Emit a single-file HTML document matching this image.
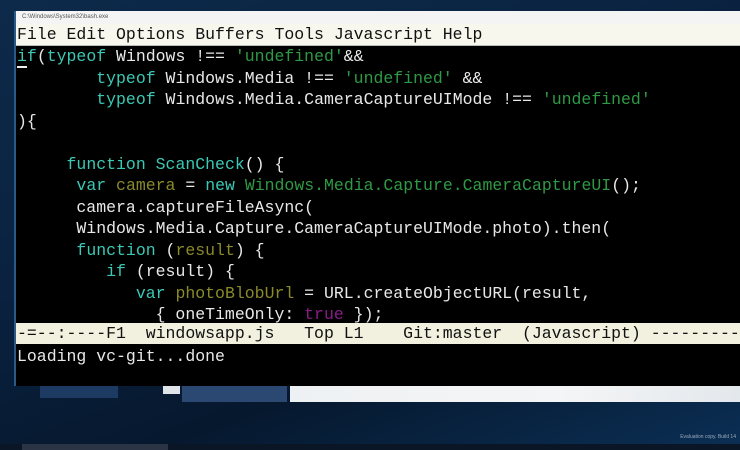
<!DOCTYPE html>
<html><head><style>
body{margin:0;width:740px;height:450px;overflow:hidden;background:linear-gradient(160deg,#0d2a4a 0%,#0a2240 40%,#06182e 70%,#0b2f55 100%);position:relative;font-family:"Liberation Mono",monospace}
.win{position:absolute;left:14px;top:11px;width:726px;height:375px;background:#000;border-left:2px solid #2a5a8a}
.title{height:13px;background:#f4f4f4;font:6px "Liberation Sans",sans-serif;color:#555;padding-left:6px;line-height:13px}
.menu{height:21px;background:#f7f7ee;color:#111;font-size:16.5px;line-height:22px;padding-left:1px;white-space:pre;border-bottom:1px solid #bbb}
.code{position:absolute;top:35px;left:1px;color:#e8e8e8;font-size:16.5px;line-height:21.5px;white-space:pre}
.k{color:#3cc8b4}.s{color:#2f9a45}.v{color:#8a8a2a}.p{color:#8a1a8a}.cur{border-bottom:2px solid #eee}
.mode{position:absolute;top:312px;left:0;right:0;height:21px;background:#f2f0de;color:#111;font-size:16.5px;line-height:21px;white-space:pre;padding-left:1px}
.mini{position:absolute;top:335px;left:1px;color:#e8e8e8;font-size:16.5px;line-height:22px;white-space:pre}
.strip1{position:absolute;left:40px;top:386px;width:78px;height:12px;background:#1d3a62}
.strip2{position:absolute;left:55px;top:386px;width:60px;height:10px;background:#24416a}
.w1{position:absolute;left:163px;top:386px;width:17px;height:8px;background:#dfe4e8}
.strip3{position:absolute;left:182px;top:386px;width:105px;height:16px;background:#2a4872;font:5px "Liberation Sans",sans-serif;color:#a8b8d0}
.w2{position:absolute;left:290px;top:386px;width:450px;height:16px;background:linear-gradient(90deg,#eef1f3,#f4f5f6 60%,#e3e8ec)}
.task{position:absolute;left:0;top:444px;width:740px;height:6px;background:#0a1526}
.sb{position:absolute;left:22px;top:444px;width:146px;height:6px;background:#2a3444}
.ev{position:absolute;right:4px;top:434px;font:5px "Liberation Sans",sans-serif;color:#9ab}
</style></head><body>
<div class="strip1"></div>
<div class="w1"></div>
<div class="strip3"></div>
<div class="w2"></div>
<div class="win">
<div class="title">C:\Windows\System32\bash.exe</div>
<div class="menu">File Edit Options Buffers Tools Javascript Help</div>
<div class="code"><span class="k"><span class="cur">i</span>f</span>(<span class="k">typeof</span> Windows !== <span class="s">'undefined'</span>&amp;&amp;
        <span class="k">typeof</span> Windows.Media !== <span class="s">'undefined'</span> &amp;&amp;
        <span class="k">typeof</span> Windows.Media.CameraCaptureUIMode !== <span class="s">'undefined'</span>
){

     <span class="k">function</span> <span class="k">ScanCheck</span>() {
      <span class="k">var</span> <span class="v">camera</span> = <span class="k">new</span> <span class="s">Windows.Media.Capture.CameraCaptureUI</span>();
      camera.captureFileAsync(
      Windows.Media.Capture.CameraCaptureUIMode.photo).then(
      <span class="k">function</span> (<span class="v">result</span>) {
         <span class="k">if</span> (result) {
            <span class="k">var</span> <span class="v">photoBlobUrl</span> = URL.createObjectURL(result,
              { oneTimeOnly: <span class="p">true</span> });</div>
<div class="mode">-=--:----F1  windowsapp.js   Top L1    Git:master  (Javascript) ----------</div>
<div class="mini">Loading vc-git...done</div>
</div>
<div class="task"></div><div class="sb"></div>
<div class="ev">Evaluation copy. Build 14</div>
</body></html>
